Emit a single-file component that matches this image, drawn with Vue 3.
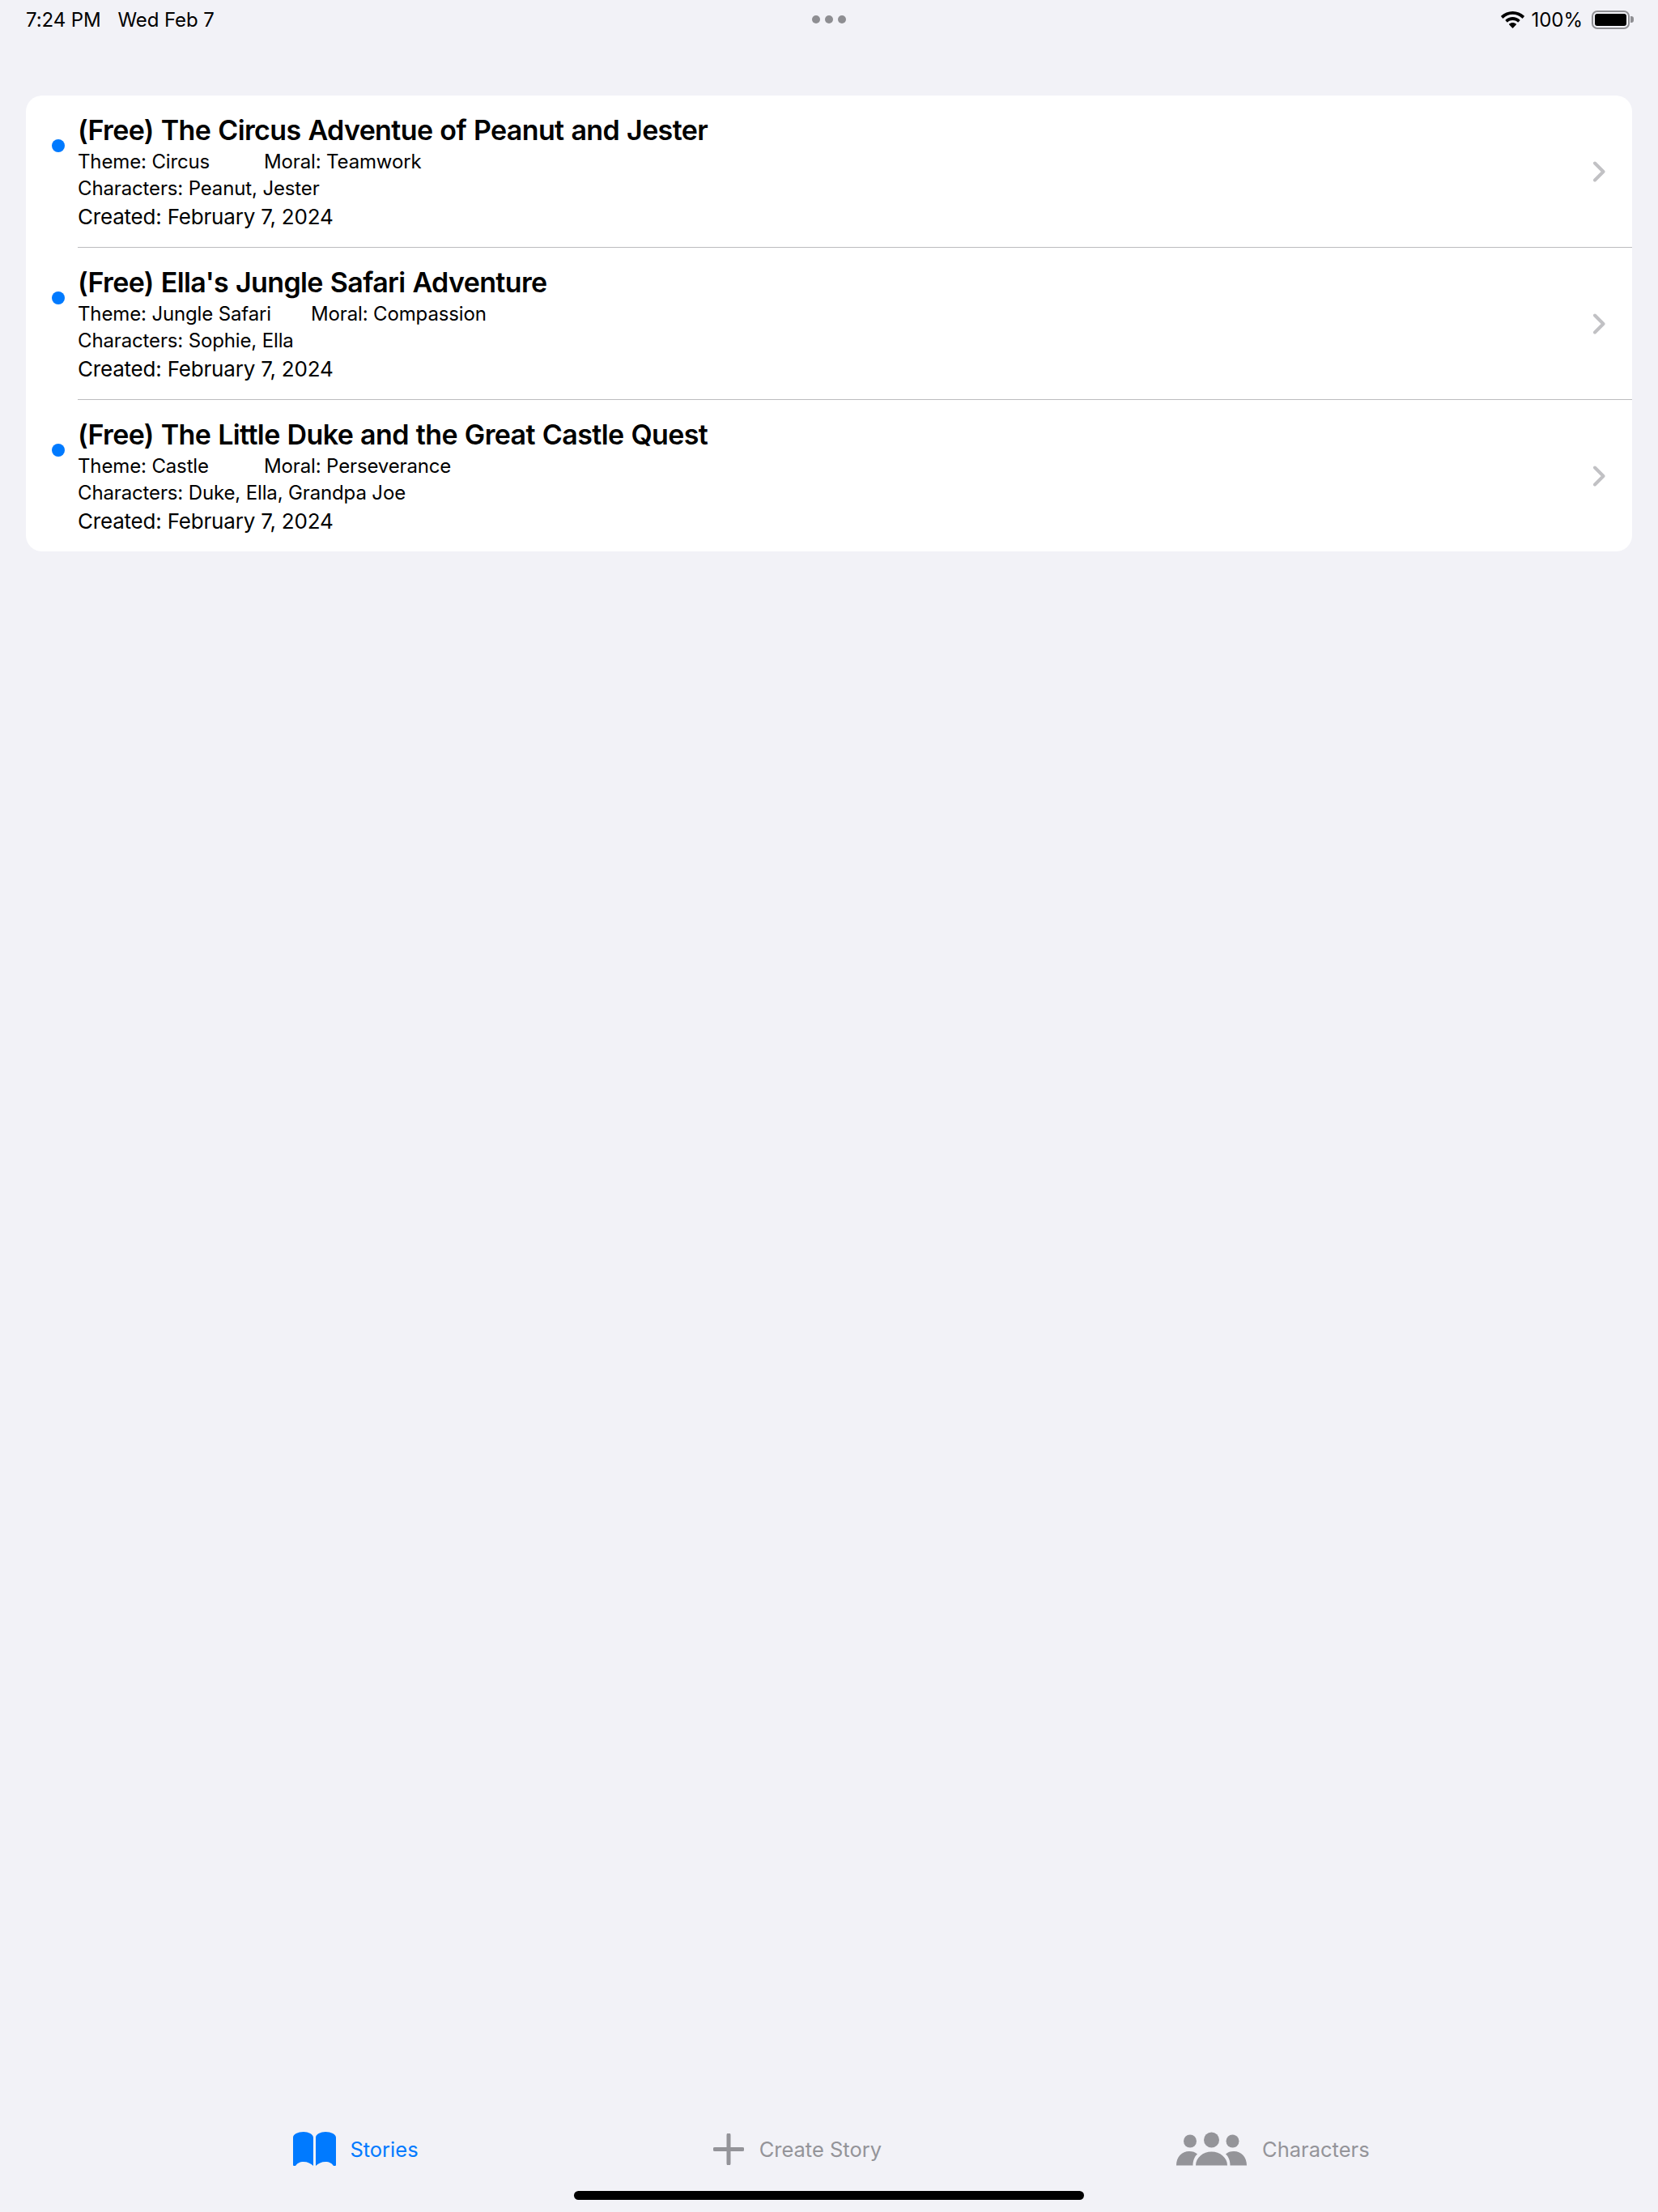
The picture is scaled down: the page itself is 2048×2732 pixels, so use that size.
<script setup>
const stories = [
  { title: '(Free) The Circus Adventue of Peanut and Jester', theme: 'Circus', moral: 'Teamwork', characters: 'Peanut, Jester', created: 'February 7, 2024' },
  { title: "(Free) Ella's Jungle Safari Adventure", theme: 'Jungle Safari', moral: 'Compassion', characters: 'Sophie, Ella', created: 'February 7, 2024' },
  { title: '(Free) The Little Duke and the Great Castle Quest', theme: 'Castle', moral: 'Perseverance', characters: 'Duke, Ella, Grandpa Joe', created: 'February 7, 2024' },
]
</script>

<template>
  <div class="page">
    <header class="status">
      <div class="status-left">
        <span>7:24 PM</span>
        <span>Wed Feb 7</span>
      </div>
      <div class="dots"><i></i><i></i><i></i></div>
      <div class="status-right">
        <svg class="wifi" width="29" height="21" viewBox="0 0 29 21">
          <path d="M14.5 0C9 0 4 2.1.3 5.6c-.3.3-.3.7 0 1l1.7 1.8c.3.3.7.3 1 0C6 5.5 10 3.8 14.5 3.8S23 5.5 26 8.4c.3.3.7.3 1 0l1.7-1.8c.3-.3.3-.7 0-1C25 2.1 20 0 14.5 0Z" />
          <path d="M14.5 7c-3.4 0-6.5 1.300-8.800 3.500-.3.3-.3.7 0 1l1.700 1.700c.3.3.7.3 1 0 1.600-1.400 3.700-2.300 6.100-2.300s4.500.9 6.100 2.300c.3.3.7.3 1 0l1.700-1.700c.3-.3.3-.7 0-1C21 8.300 17.900 7 14.500 7Z" />
          <path d="M14.500 14c-1.700 0-3.200.6-4.300 1.600-.3.3-.3.7 0 1l3.800 3.900c.3.3.7.3 1 0l3.800-3.900c.3-.3.3-.7 0-1-1.100-1-2.600-1.600-4.300-1.600Z" />
        </svg>
        <span class="pct">100%</span>
        <div class="battery"><div class="battery-fill"></div></div>
        <div class="battery-tip"></div>
      </div>
    </header>

    <main class="content">
      <section class="card">
        <article v-for="s in stories" :key="s.title" class="row">
          <span class="dot"></span>
          <div class="row-body">
            <div class="text">
              <h2 class="title">{{ s.title }}</h2>
              <div class="meta">
                <span class="theme">Theme: {{ s.theme }}</span>
                <span>Moral: {{ s.moral }}</span>
              </div>
              <div class="meta">Characters: {{ s.characters }}</div>
              <div class="created">Created: {{ s.created }}</div>
            </div>
            <svg class="chev" width="16" height="26" viewBox="0 0 16 26">
              <path d="M2 2.500 12.500 13 2 23.500" fill="none" stroke="#c1c1c4" stroke-width="4" stroke-linecap="round" stroke-linejoin="round" />
            </svg>
          </div>
        </article>
      </section>
    </main>

    <nav class="tabs">
      <div class="tab active">
        <svg width="53" height="42" viewBox="0 0 53 42" fill="#007aff">
          <path d="M0 7C0 3 6 0 13 0C19 0 25 3 25 7V42C22 39 18 37 13 37C8 37 5 39 3 42H1Q0 42 0 41Z" />
          <path d="M53 7C53 3 47 0 40 0C34 0 28 3 28 7V42C31 39 35 37 40 37C45 37 48 39 50 42H52Q53 42 53 41Z" />
        </svg>
        <span>Stories</span>
      </div>
      <div class="tab">
        <svg width="38" height="39" viewBox="0 0 38 39">
          <path d="M19 2V37M2 19.500H36" fill="none" stroke="#949499" stroke-width="5" stroke-linecap="round" />
        </svg>
        <span>Create Story</span>
      </div>
      <div class="tab">
        <svg width="87" height="42" viewBox="0 0 87 42" fill="#949499">
          <circle cx="17" cy="11.500" r="8" />
          <circle cx="43.500" cy="10" r="9.500" />
          <circle cx="69.500" cy="11.500" r="8" />
          <path d="M0 41.500C0 31 7 24 16 24C20 24 23.500 25 26 27.500C22.500 30.500 20.500 35.500 20.500 41.500Z" />
          <path d="M87 41.500C87 31 80 24 71 24C67 24 63.500 25 61 27.500C64.500 30.500 66.500 35.500 66.500 41.500Z" />
          <path d="M24 41.500C24 32 33 24.500 43.500 24.500S63 32 63 41.500Z" />
        </svg>
        <span>Characters</span>
      </div>
    </nav>
    <footer class="home-wrap"><div class="home"></div></footer>
  </div>
</template>

<style>
html, body { margin: 0; background: #f2f2f7; }
</style>

<style scoped>
.page {
  width: 2048px;
  height: 2732px;
  display: flex;
  flex-direction: column;
  background: #f2f2f7;
  color: #000;
  font-family: Inter, "Liberation Sans", sans-serif;
  overflow: hidden;
}
.status {
  height: 48px;
  padding: 0 30px 0 32px;
  display: grid;
  grid-template-columns: 1fr auto 1fr;
  align-items: center;
  font-size: 24px;
}
.status-left { display: flex; gap: 21px; letter-spacing: -0.1px; }
.dots { display: flex; gap: 6px; margin-right: 2px; }
.dots i { width: 10px; height: 10px; border-radius: 50%; background: #8e8e92; display: block; }
.status-right { display: flex; align-items: center; justify-content: flex-end; }
.wifi { margin-right: 8px; margin-left: 2px; }
.pct { margin-right: 11px; }
.battery {
  width: 47px;
  height: 23px;
  box-sizing: border-box;
  border: 2px solid #8f8f93;
  border-radius: 7px;
  padding: 2px;
}
.battery-fill { width: 100%; height: 100%; background: #000; border-radius: 3px; }
.battery-tip { width: 4px; height: 8px; margin-left: 1px; background: #8f8f93; border-radius: 0 3px 3px 0; }
.content { flex: 1; padding: 70px 32px 0; }
.card { background: #fff; border-radius: 20px; overflow: hidden; }
.row { display: flex; align-items: stretch; height: 188px; }
.row:first-child { height: 187px; }
.dot { width: 16px; height: 16px; border-radius: 50%; background: #007aff; margin: 54px 16px 0 32px; flex: none; }
.row-body {
  flex: 1;
  display: flex;
  align-items: center;
  justify-content: space-between;
  padding-right: 32px;
}
.row + .row .row-body { border-top: 1px solid #bcbcbe; }
.row + .row .dot { margin-top: 55px; }
.text { align-self: flex-start; padding-top: 22px; }
.title { margin: 0 0 2px; font-size: 34px; line-height: 41px; font-weight: 600; letter-spacing: -0.62px; word-spacing: 1px; }
.meta { font-size: 24px; line-height: 33px; letter-spacing: -0.14px; }
.theme { display: inline-block; min-width: 181px; margin-right: 49px; }
.created { font-size: 26px; line-height: 37px; letter-spacing: -0.2px; }
.chev { flex: none; }
.tabs {
  height: 73px;
  display: flex;
  justify-content: center;
  align-items: flex-start;
  gap: 364px;
  padding-left: 6px;
  font-size: 25.500px;
}
.tab { display: flex; align-items: center; gap: 19px; color: #949499; height: 42px; }
.tab.active { color: #007aff; gap: 17px; }
.home-wrap { height: 26px; display: flex; justify-content: center; }
.home { width: 630px; height: 11px; background: #000; border-radius: 6px; }
</style>
